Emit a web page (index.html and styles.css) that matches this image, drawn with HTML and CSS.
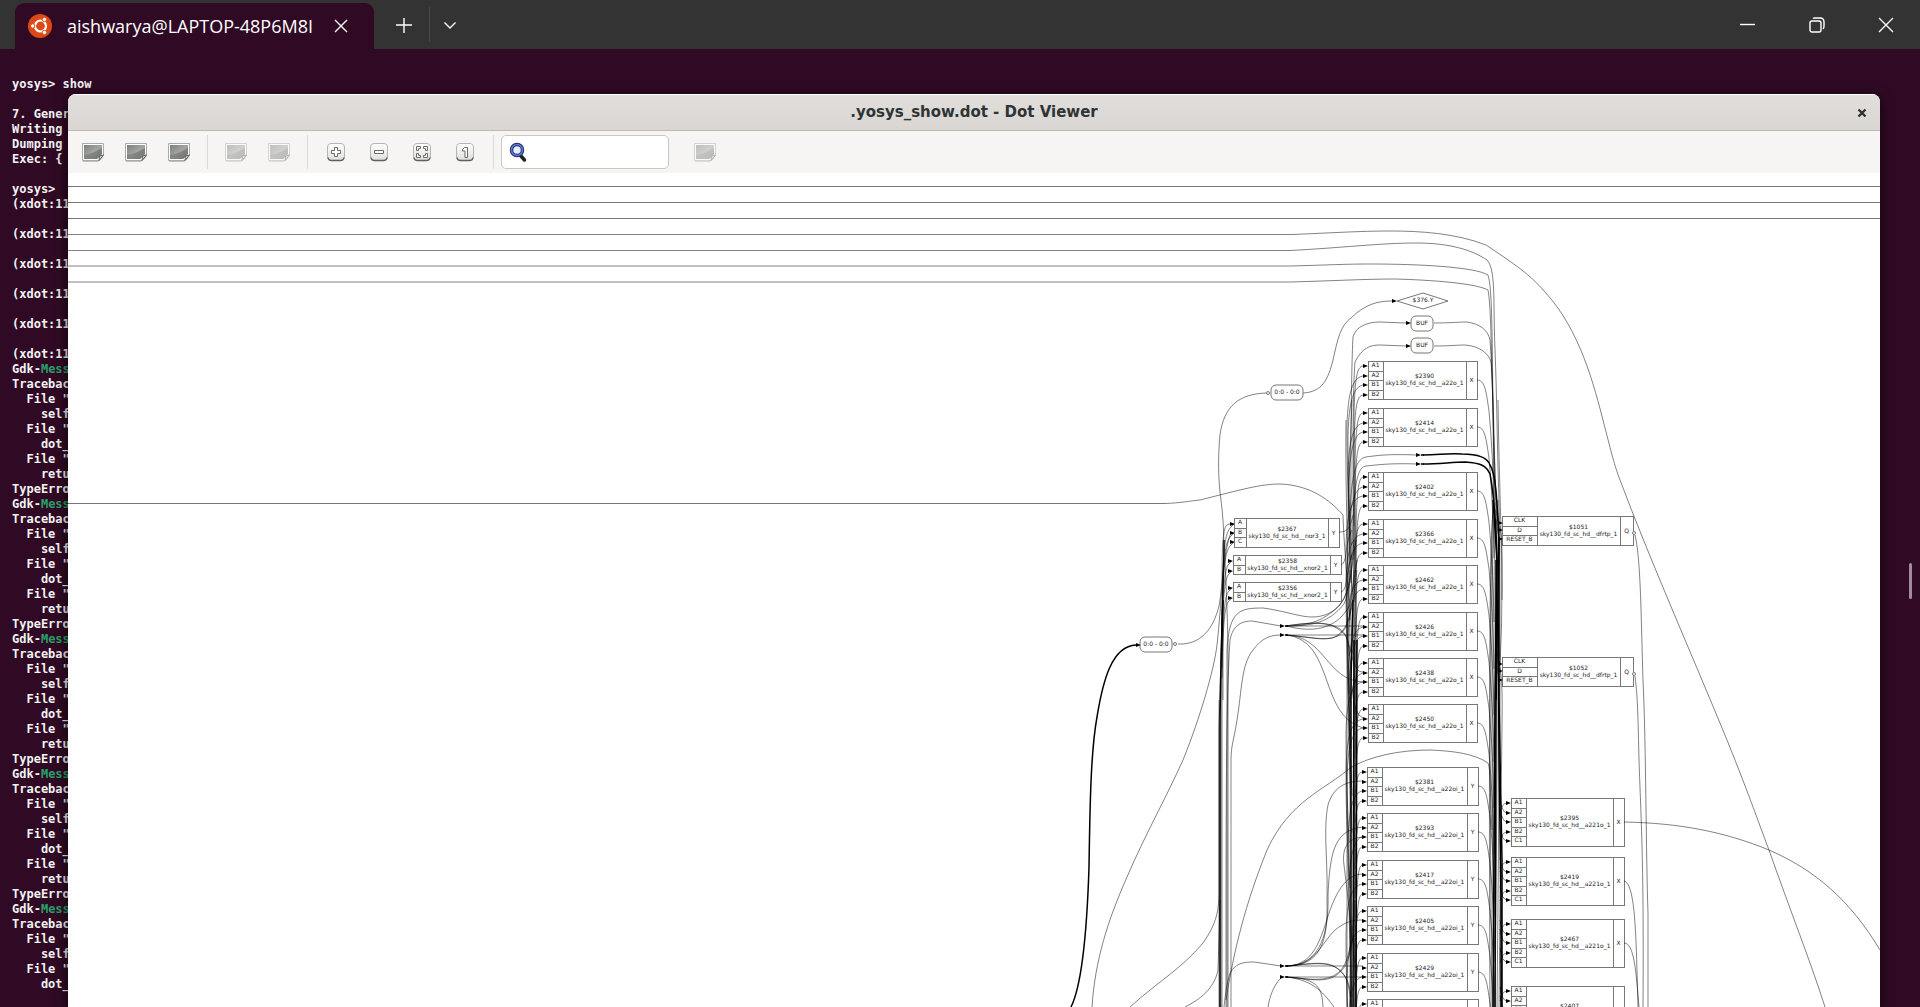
FILE: index.html
```html
<!DOCTYPE html>
<html lang="en">
<head>
<meta charset="utf-8">
<title>.yosys_show.dot - Dot Viewer</title>
<link rel="stylesheet" href="styles.css">
</head>
<body>
<svg class="defs" aria-hidden="true">
  <defs>
    <linearGradient id="photo" x1="0" y1="0" x2="1" y2="1">
      <stop offset="0" stop-color="#7d7f7c"/><stop offset="0.5" stop-color="#a3a5a1"/><stop offset="1" stop-color="#757873"/>
    </linearGradient>
    <linearGradient id="key" x1="0" y1="0" x2="0" y2="1">
      <stop offset="0" stop-color="#ffffff"/><stop offset="1" stop-color="#dededc"/>
    </linearGradient>
    <symbol id="i-image" viewBox="0 0 24 20">
      <path d="M2 19.500H17L22.500 15" stroke="#8a8c88" fill="none" opacity=".5"/>
      <path d="M1.500 1.500H22.500V13L18 18.500H1.500Z" fill="#fff" stroke="#a9aba7"/>
      <path d="M3 3H21V12L16 17H3Z" fill="url(#photo)"/>
      <path d="M3 13C10 12 16 9 21 6V12L16 17H3Z" fill="#6d706b" opacity=".55"/>
      <path d="M18 18.500L18.500 14L22.500 13Z" fill="#d8d9d6" stroke="#5f625d"/>
    </symbol>
    <symbol id="i-key" viewBox="0 0 20 20">
      <rect x="1.500" y="1.500" width="17" height="17" rx="3.500" fill="url(#key)" stroke="#b4b5b1"/>
      <path d="M2 15.500Q2.500 18.500 5 18.500H15Q17.500 18.500 18 15.500" fill="none" stroke="#5d605b" stroke-width="1.300"/>
    </symbol>
  </defs>
</svg>

<header class="tabbar">
  <div class="tab">
    <svg class="ubuntu" viewBox="0 0 24 24" aria-hidden="true">
      <circle cx="12" cy="12" r="12" fill="#dd4814"/>
      <circle cx="12.500" cy="12" r="5.500" fill="none" stroke="#fff" stroke-width="2.200"/>
      <g fill="#fff" stroke="#dd4814"><circle cx="4.700" cy="12" r="2.200"/><circle cx="16.500" cy="5.500" r="2.200"/><circle cx="16.500" cy="18.500" r="2.200"/></g>
    </svg>
    <span class="tab-name">aishwarya@LAPTOP-48P6M8I</span>
    <button class="tab-close" aria-label="Close tab"><svg width="14" height="14" viewBox="0 0 14 14"><path d="M1 1L13 13M13 1L1 13"/></svg></button>
  </div>
  <button class="tab-new" aria-label="New tab"><svg width="16" height="16" viewBox="0 0 16 16"><path d="M8 1V16M0 8H16"/></svg></button>
  <button class="tab-menu" aria-label="Tab menu"><svg width="14" height="14" viewBox="0 0 14 14"><path d="M1.500 4.500L7 10L12.500 4.500"/></svg></button>
  <div class="window-buttons">
    <button aria-label="Minimize"><svg width="16" height="16" viewBox="0 0 16 16"><path d="M0 7.500H15"/></svg></button>
    <button aria-label="Restore"><svg width="16" height="16" viewBox="0 0 16 16"><rect x="1" y="4" width="11" height="11" rx="2"/><path d="M4 1.500Q4.500 1 6 1H11Q15 1 15 5V9Q15 11 14 12"/></svg></button>
    <button aria-label="Close"><svg width="16" height="16" viewBox="0 0 16 16"><path d="M1 1L15 15M15 1L1 15"/></svg></button>
  </div>
</header>

<main class="terminal">
<pre class="log">yosys&gt; show

7. Gener
Writing 
Dumping 
Exec: {

yosys&gt;
(xdot:11

(xdot:11

(xdot:11

(xdot:11

(xdot:11

(xdot:11
Gdk-<b>Mess</b>
Tracebac
  File "
    self
  File "
    dot_
  File "
    retu
TypeErro
Gdk-<b>Mess</b>
Tracebac
  File "
    self
  File "
    dot_
  File "
    retu
TypeErro
Gdk-<b>Mess</b>
Tracebac
  File "
    self
  File "
    dot_
  File "
    retu
TypeErro
Gdk-<b>Mess</b>
Tracebac
  File "
    self
  File "
    dot_
  File "
    retu
TypeErro
Gdk-<b>Mess</b>
Tracebac
  File "
    self
  File "
    dot_</pre>
  <div class="thumb"></div>

  <section class="viewer">
    <div class="viewer-title">
      <h1>.yosys_show.dot - Dot Viewer</h1>
      <button class="viewer-close" aria-label="Close viewer"><svg width="10" height="10" viewBox="0 0 10 10"><path d="M1.500 1.500L8.500 8.500M8.500 1.500L1.500 8.500"/></svg></button>
    </div>
    <div class="toolbar">
      <button aria-label="Open"><svg width="24" height="20"><use href="#i-image"/></svg></button>
      <button aria-label="Reload"><svg width="24" height="20"><use href="#i-image"/></svg></button>
      <button aria-label="Print"><svg width="24" height="20"><use href="#i-image"/></svg></button>
      <span class="sep"></span>
      <button disabled aria-label="Back"><svg width="24" height="20"><use href="#i-image"/></svg></button>
      <button disabled aria-label="Forward"><svg width="24" height="20"><use href="#i-image"/></svg></button>
      <span class="sep"></span>
      <button aria-label="Zoom in"><svg width="20" height="20"><use href="#i-key"/><path class="glyph" d="M8.500 5.500H11.500V8.500H14.500V11.500H11.500V14.500H8.500V11.500H5.500V8.500H8.500Z"/></svg></button>
      <button aria-label="Zoom out"><svg width="20" height="20"><use href="#i-key"/><path class="glyph" d="M5.500 8.500H14.500V11.500H5.500Z"/></svg></button>
      <button aria-label="Zoom to fit"><svg width="20" height="20"><use href="#i-key"/><path class="glyph" d="M4.500 4.500H8.500V6.500H6.500V8.500H4.500ZM15.500 4.500H11.500V6.500H13.500V8.500H15.500ZM4.500 15.500H8.500V13.500H6.500V11.500H4.500ZM15.500 15.500H11.500V13.500H13.500V11.500H15.500Z"/></svg></button>
      <button aria-label="Normal size"><svg width="20" height="20"><use href="#i-key"/><path class="glyph" d="M9.500 5.500H12.500V15.500H10V9H7.500V7.500Z"/></svg></button>
      <span class="sep"></span>
      <label class="search">
        <svg width="18" height="22" viewBox="0 0 18 22" aria-hidden="true">
          <path d="M11.500 14.500L15.500 19" stroke="#222" stroke-width="3.500" stroke-linecap="round"/>
          <circle cx="8" cy="9" r="5.500" fill="#e8ecf8" stroke="#223077" stroke-width="3.500"/>
          <circle cx="8" cy="9" r="5.500" fill="none" stroke="#5d77c8" stroke-width="1.500"/>
        </svg>
        <input type="text" aria-label="Find">
      </label>
      <button class="find-next" disabled aria-label="Find next"><svg width="24" height="20"><use href="#i-image"/></svg></button>
    </div>
    <svg class="graph" aria-label="Netlist graph"><g id="graph" transform="translate(-68 -173)"></g></svg>
  </section>
</main>
<script src="graph.js"></script>
</body>
</html>
```
FILE: styles.css
```css
* { box-sizing: border-box; }

body {
  margin: 0;
  height: 100vh;
  display: flex;
  flex-direction: column;
  overflow: hidden;
  background: #300a24;
  color: #f2f2f2;
  font-family: "Open Sans", "Noto Sans", sans-serif;
}

button {
  display: flex;
  align-items: center;
  justify-content: center;
  margin: 0;
  padding: 0;
  border: 0;
  background: none;
  color: inherit;
}

.defs { position: absolute; width: 0; height: 0; }

/* terminal tab strip */
.tabbar {
  flex: none;
  display: flex;
  height: 49px;
  background: #333333;
}

.tabbar button svg { fill: none; stroke: #ffffff; stroke-width: 1.4; }

.tab {
  display: flex;
  align-items: center;
  width: 359px;
  margin: 3px 0 0 15px;
  padding: 0 19px 0 13px;
  border-radius: 9px 9px 0 0;
  background: #300a24;
  color: #ffffff;
}

.ubuntu { width: 24px; height: 24px; margin-right: 15px; }

.tab-name {
  flex: 1;
  overflow: hidden;
  font-size: 18px;
  font-weight: 500;
  line-height: 24px;
  white-space: nowrap;
}

.tab-close { width: 28px; height: 28px; }
.tab-new { width: 56px; border-right: 1px solid #484848; margin: 7px 0; padding-left: 4px; }
.tab-menu { width: 40px; }
.window-buttons { display: flex; margin-left: auto; }
.window-buttons button { width: 69px; }

/* terminal */
.terminal {
  position: relative;
  flex: 1;
  min-height: 0;
  overflow: hidden;
}

.log {
  margin: 0;
  padding: 28px 0 0 12px;
  font: 700 12px/15px "DejaVu Sans Mono", monospace;
}

.log b { color: #26a269; }

.thumb {
  position: absolute;
  top: 514px;
  right: 8px;
  width: 3px;
  height: 36px;
  border-radius: 2px;
  background: #a08d9b;
}

/* floating viewer window */
.viewer {
  position: absolute;
  top: 45px;
  right: 40px;
  bottom: 0;
  left: 68px;
  display: flex;
  flex-direction: column;
  overflow: hidden;
  border-radius: 8px 8px 0 0;
  background: #ffffff;
  box-shadow: 0 2px 14px rgba(0, 0, 0, 0.7);
}

.viewer-title {
  flex: none;
  display: grid;
  grid-template-columns: 36px 1fr 36px;
  align-items: center;
  height: 37px;
  border-top: 1px solid #ffffff;
  border-bottom: 1px solid #bfb8b1;
  background: linear-gradient(#e1dedb, #dad6d2);
}

.viewer-title h1 {
  grid-column: 2;
  margin: 0;
  padding-bottom: 2px;
  color: #2e3436;
  font: 700 15px/20px "DejaVu Sans", sans-serif;
  text-align: center;
}

.viewer-close svg { stroke: #2e3436; stroke-width: 2.4; }

.toolbar {
  flex: none;
  display: flex;
  align-items: center;
  height: 42px;
  padding-left: 3px;
  background: #f6f5f3;
}

.toolbar button { width: 43px; height: 34px; }
.toolbar button:disabled { opacity: 0.45; }
.glyph { fill: #ffffff; stroke: #6a6d68; }

.sep {
  width: 14px;
  height: 34px;
  background: linear-gradient(#dcdad7, #dcdad7) center / 1px 100% no-repeat;
}

.search {
  display: flex;
  align-items: center;
  width: 168px;
  height: 34px;
  margin-left: 1px;
  padding-left: 7px;
  border: 1px solid #cdc7c2;
  border-radius: 5px;
  background: #ffffff;
}

.search input {
  flex: 1;
  min-width: 0;
  height: 28px;
  border: 0;
  outline: 0;
  background: none;
}

.search svg { fill: none; }
.find-next { margin-left: 14px; }

/* netlist graph */
.graph { flex: 1; width: 100%; min-height: 0; background: #ffffff; }

.graph text {
  fill: #222222;
  font-family: "DejaVu Sans", sans-serif;
  font-size: 6px;
  text-anchor: middle;
}

.box, .rail { fill: none; stroke: #777777; shape-rendering: crispEdges; }
.node { fill: #ffffff; stroke: #777777; }
.edge { fill: none; stroke: #000000; stroke-opacity: 0.55; stroke-width: 0.9; }
.bus { fill: none; stroke: #000000; stroke-width: 1.5; }
.tip { fill: #000000; }
```
FILE: graph.js
```js
const root = document.getElementById("graph");
const parts = [];

const path = (cls, d) => parts.push(`<path class="${cls}" d="${d}"/>`);
const edge = (d) => path("edge", d);
const bus = (d) => path("bus", d);
const text = (x, y, s) => parts.push(`<text x="${x}" y="${y}">${s}</text>`);
const tip = (x, y) => path("tip", `M${x} ${y}l-5 -2v4z`);
const dot = (x, y) => parts.push(`<circle class="node" cx="${x}" cy="${y}" r="1.500"/>`);

// A cell: port column, name column, output column.
function cell(x, y, w, h, left, right, id, type, ports, out) {
  parts.push(`<rect class="box" x="${x}" y="${y}" width="${w}" height="${h}"/>`);
  path("box", `M${x + left} ${y}v${h}M${x + w - right} ${y}v${h}`);
  const step = h / ports.length;
  ports.forEach((p, i) => {
    if (i) path("box", `M${x} ${Math.round(y + step * i)}h${left}`);
    text(x + left / 2, Math.round(y + step * i + 6), p);
  });
  const mid = x + (left + w - right) / 2;
  text(mid, y + Math.round(h / 2) - 2, "$" + id);
  text(mid, y + Math.round(h / 2) + 5, "sky130_fd_sc_hd__" + type);
  text(x + w - right / 2, y + Math.round(h / 2) + 2, out);
}

function rounded(x, y, w, label) {
  parts.push(`<rect class="node" x="${x}" y="${y}" width="${w}" height="15" rx="5"/>`);
  text(x + w / 2, y + 9, label);
}

// top-level rails
path("rail", "M68 186H1880M68 202H1880M68 218H1880M68 503H1165");
edge("M68 234.500H1292C1330 233 1360 231 1390 231S1455 233 1486 245C1510 261 1530 274 1545 292C1580 330 1594 385 1604 424C1612 455 1614 464 1620 480C1650 560 1690 650 1727 740C1750 797 1762 832 1769 850C1790 910 1810 960 1825 1007");
edge("M68 250.500H1290C1340 248 1380 243 1416 243C1450 243 1472 250 1487 260C1496 270 1493 300 1495 350S1497 440 1499 500");
edge("M68 266H1290C1330 265 1345 264 1370 264C1420 264 1475 267 1488 275C1493 290 1492 350 1494 500");
edge("M68 282H1290C1330 281 1365 279 1395 279C1430 280 1475 283 1488 290C1492 310 1491 380 1496 500");
edge("M1165 503.500C1180 503 1190 501 1200 500C1240 490 1260 484 1280 484C1310 485 1330 500 1343 515C1344 550 1348 580 1350 620");

// constants and buffers
edge("M1303 393C1322 392 1328 380 1333 360C1338 338 1340 326 1352 317C1366 304 1378 301 1392 301");
tip(1397, 301);
path("node", "M1397 301L1423 293L1448 301L1423 309Z");
text(1423, 302, "$376.Y");
rounded(1411, 316, 22, "BUF");
rounded(1411, 338, 22, "BUF");
edge("M1352 600C1350 500 1351 370 1353 337C1356 326 1368 322 1380 322L1406 323");
tip(1411, 323);
edge("M1434 323C1450 323 1458 322 1467 322C1480 324 1488 330 1490 340C1493 380 1493 420 1495 500");
edge("M1354 600C1353 500 1352 400 1355 362C1362 348 1370 345 1380 345L1406 346");
tip(1411, 346);
edge("M1434 346C1450 346 1458 345 1465 345C1480 346 1489 354 1491 362C1494 400 1493 420 1496 500");
rounded(1271, 385, 32, "0:0 - 0:0");
dot(1268, 393);
edge("M1266 393C1240 394 1224 405 1220 435C1218 455 1218 480 1221 500C1225 530 1224 560 1223 600V700");
rounded(1140, 637, 32, "0:0 - 0:0");
dot(1175, 644);
edge("M1178 644C1200 645 1213 630 1219 606C1224 580 1221 560 1223 540C1225 520 1228 525 1234 524");
bus("M1071 1007C1082 985 1087 930 1089 867C1090 800 1091 750 1097 717C1103 680 1112 646 1136 645");
tip(1141, 645);
edge("M1092 1007C1095 960 1108 920 1127 877C1145 835 1165 800 1183 760C1200 718 1214 670 1217 645C1222 600 1222 560 1230 535");
edge("M1130 1007C1160 980 1180 970 1203 943C1217 923 1219 910 1219 890V700");
edge("M1185 1007C1205 997 1215 985 1218 970L1220 900");

// small junctions
const junctions = [[1421, 455], [1421, 464], [1285, 626], [1285, 635], [1285, 966], [1285, 977]];
junctions.forEach(([x, y]) => { tip(x, y); path("bus", `M${x} ${y}h3`); });
edge("M1350 560C1349 490 1352 459 1366 457S1390 454 1417 455");
bus("M1423 455C1440 455 1446 453 1462 454C1480 454 1488 459 1490 465C1496 474 1497 500 1499 540L1496 700");
edge("M1352 560C1353 490 1356 467 1366 466S1390 463 1417 464");
bus("M1423 464C1440 464 1452 462 1465 462C1480 463 1486 465 1490 474C1493 490 1496 520 1497 560L1496 700");

edge("M1227 1007V650C1229 610 1240 608 1263 608C1285 611 1300 617 1312 617C1335 617 1350 600 1350 570");
edge("M1226 1007C1226 800 1226 700 1230 640C1233 624 1243 621 1252 621L1281 626");
edge("M1231 1007V760C1231 745 1234 740 1237 720C1242 690 1241 665 1253 650C1262 638 1270 635 1281 635");
["C1310 626 1325 620 1340 605C1352 590 1352 560 1354 540",
 "C1310 626 1328 624 1344 604C1351 590 1352 560 1356 540",
 "C1310 632 1335 632 1350 605L1357 560",
 "H1363",
 "C1310 622 1335 620 1345 634C1354 655 1352 672 1363 672",
 "C1315 622 1335 620 1347 638C1353 660 1348 712 1363 718"].forEach((d) => edge("M1286 626" + d));
["H1363",
 "C1310 637 1325 642 1338 636C1350 628 1352 610 1357 570",
 "C1312 637 1320 640 1332 638C1350 632 1352 610 1354 570",
 "C1325 636 1326 680 1363 682",
 "C1335 640 1318 715 1363 728"].forEach((d) => edge("M1286 635" + d));

edge("M1224 1007C1226 990 1226 988 1230 973C1236 963 1243 962 1254 962L1281 966");
edge("M1268 1007C1270 995 1274 985 1281 978");
edge("M1226 1000C1234 950 1245 905 1267 850C1290 800 1325 790 1350 768C1370 756 1400 750 1430 750C1455 751 1475 754 1488 763C1491 770 1490 800 1492 830");
["C1322 966 1328 940 1327 900C1328 860 1323 830 1328 805C1334 784 1350 781 1363 781",
 "C1322 966 1329 930 1328 895C1330 850 1335 830 1363 827",
 "C1318 966 1322 930 1332 905C1340 885 1350 874 1363 874",
 "C1315 966 1320 945 1335 930C1345 922 1352 920 1363 920",
 "C1320 963 1335 960 1346 978C1350 985 1351 995 1352 1007",
 "C1318 963 1332 959 1344 975C1349 982 1350 995 1351 1007",
 "H1363"].forEach((d) => edge("M1286 966" + d));
["C1312 979 1330 985 1342 970C1350 962 1354 940 1355 900",
 "C1310 979 1328 983 1340 971C1349 962 1353 940 1354 900",
 "H1363",
 "C1320 978 1322 990 1323 1007",
 "C1315 980 1325 995 1334 1007"].forEach((d) => edge("M1286 977" + d));
edge("M1363 837C1346 838 1342 850 1344 865C1347 890 1352 930 1356 980");

// bundle feeding the nor/xnor cells
[[1219, 690], [1221, 620], [1222, 580], [1228, 640]].forEach(([x, y]) =>
  edge(`M${x} 1007V${y + 40}Q${x + 1} ${y} 1224 540`));
bus("M1220 1007V720Q1221 650 1223 600");
[524, 533, 542].forEach((y) => { edge(`M1222 ${y + 90}C1223 ${y + 30} 1224 ${y + 12} 1230 ${y + 4}L1234 ${y}`); tip(1235, y); });
[561, 571, 588, 598].forEach((y) => { edge(`M1222 ${y + 80}C1223 ${y + 30} 1224 ${y + 12} 1228 ${y + 4}L1232 ${y}`); tip(1233, y); });

// bundle left of the a22 column
bus("M1351 1007V680L1353 600");
bus("M1353 1007L1354 640");
bus("M1356 1007L1357 640");
edge("M1347 1007V600Q1347 500 1352 400");
edge("M1350 1007V640Q1345 480 1346 420");

// bundle right of the a22 column
[1490, 1492, 1494, 1496, 1498, 1500].forEach((x, i) => {
  edge(`M${1494 + i} 500C${x} 540 ${x} 580 ${x} 700S${x + 1} 900 ${x + 2} 1007`);
});
edge("M1490 1007C1489 800 1489 640 1493 500");
edge("M1498 400C1499 480 1502 540 1502 600");
bus("M1493 500L1497 560L1495 700L1493 1007");
bus("M1499 540V700L1502 860V1007");
bus("M1496 560V700L1495 1007");
bus("M1498 600L1499 760L1501 900V1007");

// cells
function column(x, w, rows, type, out) {
  rows.forEach(([y, id], row) => {
    cell(x, y, w, 38, 15, 11, id, type, ["A1", "A2", "B1", "B2"], out);
    [5, 15, 24, 34].forEach((dy, i) => {
      const py = y + dy;
      tip(x, py);
      if (type === "a22oi_1" && i === 1) return;
      const far = 1346 + (row + i) % 4;
      const near = 1354 + (row + i) % 3;
      edge(i % 3
        ? `M${far + 3} ${py + 160}C${far + 1} ${py + 110} ${far} ${py + 90} ${far} ${py + 50}C${far + 1} ${py + 14} ${far + 6} ${py + 2} ${x - 5} ${py}`
        : `M${near} ${py + 160}V${py + 50}C${near + 1} ${py + 10} ${near + 3} ${py + 1} ${x - 5} ${py}`);
    });
    edge(`M${x + w} ${y + 19}C${x + w + 8} ${y + 19} ${x + w + 9} ${y + 30} ${x + w + 12} ${y + 50}Q${x + w + 16} ${y + 92} ${x + w + 17} ${y + 150}`);
  });
}
column(1368, 109, [[361, 2390], [408, 2414], [472, 2402], [519, 2366], [565, 2462], [612, 2426], [658, 2438], [704, 2450]], "a22o_1", "X");
column(1367, 111, [[767, 2381], [813, 2393], [860, 2417], [906, 2405], [953, 2429], [999, 2441]], "a22oi_1", "Y");

cell(1234, 518, 105, 29, 12, 11, 2367, "nor3_1", ["A", "B", "C"], "Y");
cell(1233, 555, 108, 19, 12, 11, 2358, "xnor2_1", ["A", "B"], "Y");
cell(1233, 582, 108, 19, 12, 11, 2356, "xnor2_1", ["A", "B"], "Y");
edge("M1339 532C1346 532 1350 530 1353 515");
edge("M1341 565C1348 562 1344 545 1352 530");
edge("M1341 592C1348 590 1346 570 1352 555");

[[516, 1051], [657, 1052]].forEach(([y, id]) => {
  cell(1502, y, 131, 29, 35, 13, id, "dfrtp_1", ["CLK", "D", "RESET_B"], "Q");
  [7, 14, 23].forEach((dy) => { tip(1503, y + dy); edge(`M1496 ${y + dy - 20}L1499 ${y + dy}`); });
  dot(1634, y + 17);
  edge(`M1500 ${y + 10}C1503 ${y + 30} 1502 ${y + 50} 1502 ${y + 70}Q1502 ${y + 110} 1500 ${y + 150}`);
});
edge("M1635 535C1641 560 1641 620 1643 680C1646 740 1646 860 1648 913V1007");
edge("M1635 676C1638 700 1638 720 1639 760C1641 820 1644 860 1643 1007");

[[798, 2395], [857, 2419], [919, 2467], [986, 2407]].forEach(([y, id]) => {
  cell(1511, y, 113, 48, 15, 11, id, "a221o_1", ["A1", "A2", "B1", "B2", "C1"], "X");
  [5, 15, 24, 34, 43].forEach((dy, i) => {
    const from = i === 0 || i === 3 ? 10 : -14;
    tip(1511, y + dy);
    edge(`M1500 ${y + dy + from}Q1502 ${y + dy} 1507 ${y + dy}`);
  });
});
edge("M1624 822C1680 823 1725 832 1769 850C1815 870 1850 900 1880 950");
edge("M1624 881C1636 884 1636 940 1638 1007");
edge("M1624 943C1634 943 1636 970 1639 1007");

root.innerHTML = parts.join("");
```
